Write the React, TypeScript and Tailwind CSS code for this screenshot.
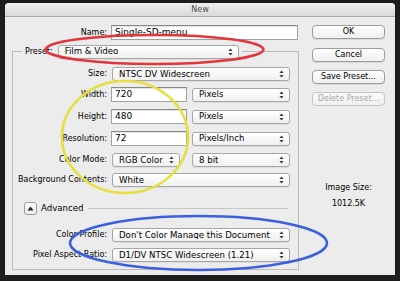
import React from "react";

function Arrows() {
  return (
    <svg width="5" height="8" viewBox="0 0 5 8" className="shrink-0">
      <path d="M2.5 0.6 L4.6 3.1 H0.4 Z M2.5 7.4 L4.6 4.9 H0.4 Z" fill="#3a3a3a" />
    </svg>
  );
}

function Select({ label, className }: { label: string; className: string }) {
  return (
    <div
      className={`flex h-[14px] items-center justify-between rounded-[3px] border border-[#a6a6a6] bg-gradient-to-b from-white to-[#f0f0f0] pl-[6px] pr-[5px] text-[8.6px] shadow-[0_1px_0_rgba(0,0,0,0.06)] ${className}`}
    >
      <span className="truncate whitespace-nowrap">{label}</span>
      <Arrows />
    </div>
  );
}

function Input({ value, className }: { value: string; className: string }) {
  return (
    <div
      className={`flex h-[15px] items-center border border-[#a0a0a0] border-t-[#878787] bg-white pl-[3px] text-[9px] shadow-[inset_0_1px_1px_rgba(0,0,0,0.12)] ${className}`}
    >
      {value}
    </div>
  );
}

function Button({ label, disabled }: { label: string; disabled?: boolean }) {
  return (
    <div
      className={
        disabled
          ? "flex h-[14px] w-[73px] items-center justify-center rounded-[4px] border border-[#c4c4c4] bg-gradient-to-b from-[#fafafa] to-[#f0f0f0] text-[#a9a9a9]"
          : "flex h-[14px] w-[73px] items-center justify-center rounded-[4px] border border-[#9d9d9d] bg-gradient-to-b from-white to-[#efefef] shadow-[0_1px_0_rgba(0,0,0,0.08)]"
      }
    >
      {label}
    </div>
  );
}

function Row({ label, children, className }: { label: string; children: React.ReactNode; className: string }) {
  return (
    <div className={`flex items-center ${className}`}>
      <span className="w-[94px] whitespace-nowrap text-right">{label}</span>
      {children}
    </div>
  );
}

export default function App() {
  return (
    <div className="relative h-[281px] w-[400px] overflow-hidden bg-[#1d1d1d] pl-[5px] pt-[3px] font-['DejaVu_Sans',sans-serif] text-[8px] leading-none text-black">
      <div className="flex h-[272px] w-[390px] flex-col rounded-t-[4px] bg-[#ececec]">
        <div className="flex h-[14px] items-center justify-center rounded-t-[4px] border-b border-[#a9a9a9] bg-gradient-to-b from-[#f0f0f0] to-[#dadada] text-[#4a4a4a]">
          New
        </div>
        <div className="flex">
          <div className="w-[293px] pt-[8px]">
            <div className="flex h-[15px] items-center">
              <span className="w-[102px] text-right">Name:</span>
              <Input value="Single-SD-menu" className="ml-[4px] w-[187px]" />
            </div>
            <fieldset className="ml-[7px] mt-[5px] w-[287px] border border-[#bcbcbc] pb-[7px]">
              <legend className="ml-[9px] px-[3px]">
                <div className="flex h-[13px] items-center">
                  <span>Preset:</span>
                  <Select label="Film & Video" className="ml-[5px] h-[13px] w-[181px]" />
                </div>
              </legend>
              <Row label="Size:" className="mt-[9px] h-[14px]">
                <Select label="NTSC DV Widescreen" className="ml-[5px] w-[178px]" />
              </Row>
              <Row label="Width:" className="mt-[6px] h-[15px]">
                <Input value="720" className="ml-[4px] w-[76px]" />
                <Select label="Pixels" className="ml-[5px] w-[98px]" />
              </Row>
              <Row label="Height:" className="mt-[7px] h-[15px]">
                <Input value="480" className="ml-[4px] w-[76px]" />
                <Select label="Pixels" className="ml-[5px] w-[98px]" />
              </Row>
              <Row label="Resolution:" className="mt-[7px] h-[15px]">
                <Input value="72" className="ml-[4px] w-[76px]" />
                <Select label="Pixels/Inch" className="ml-[5px] w-[98px]" />
              </Row>
              <Row label="Color Mode:" className="mt-[7px] h-[14px]">
                <Select label="RGB Color" className="ml-[5px] w-[68px]" />
                <Select label="8 bit" className="ml-[12px] w-[98px]" />
              </Row>
              <Row label="Background Contents:" className="mt-[6px] h-[14px]">
                <Select label="White" className="ml-[5px] w-[178px]" />
              </Row>
              <div className="mt-[15px] flex h-[13px] items-center pl-[11px]">
                <div className="flex h-[13px] w-[13px] items-center justify-center rounded-[3px] border border-[#9d9d9d] bg-gradient-to-b from-white to-[#ededed]">
                  <svg width="7" height="5" viewBox="0 0 7 5">
                    <path d="M3.5 0.5 L6.5 4.5 H0.5 Z" fill="#222" />
                  </svg>
                </div>
                <span className="ml-[4px] text-[8.6px]">Advanced</span>
                <div className="ml-[5px] h-px w-[200px] bg-[#c6c6c6]" />
              </div>
              <Row label="Color Profile:" className="mt-[13px] h-[14px]">
                <Select label="Don't Color Manage this Document" className="ml-[5px] w-[178px]" />
              </Row>
              <Row label="Pixel Aspect Ratio:" className="mt-[6px] h-[14px]">
                <Select label="D1/DV NTSC Widescreen (1.21)" className="ml-[5px] w-[178px]" />
              </Row>
            </fieldset>
          </div>
          <div className="flex flex-col pl-[14px] pt-[8px]">
            <Button label="OK" />
            <div className="mt-[9px]">
              <Button label="Cancel" />
            </div>
            <div className="mt-[8px]">
              <Button label="Save Preset..." />
            </div>
            <div className="mt-[8px]">
              <Button label="Delete Preset..." disabled />
            </div>
            <div className="mt-[78px] flex w-[73px] flex-col items-center gap-[8px]">
              <span>Image Size:</span>
              <span>1012.5K</span>
            </div>
          </div>
        </div>
      </div>
      <svg
        className="pointer-events-none absolute left-0 top-0"
        width="400"
        height="281"
        viewBox="0 0 400 281"
      >
        <ellipse cx="154.5" cy="49.5" rx="109" ry="14.5" fill="none" stroke="#e3353c" strokeWidth="2.6" />
        <ellipse cx="125" cy="137" rx="63" ry="56" fill="none" stroke="#e6df3e" strokeWidth="2.6" />
        <ellipse cx="198.5" cy="243" rx="128.5" ry="27" fill="none" stroke="#3a60df" strokeWidth="2.6" />
      </svg>
    </div>
  );
}
